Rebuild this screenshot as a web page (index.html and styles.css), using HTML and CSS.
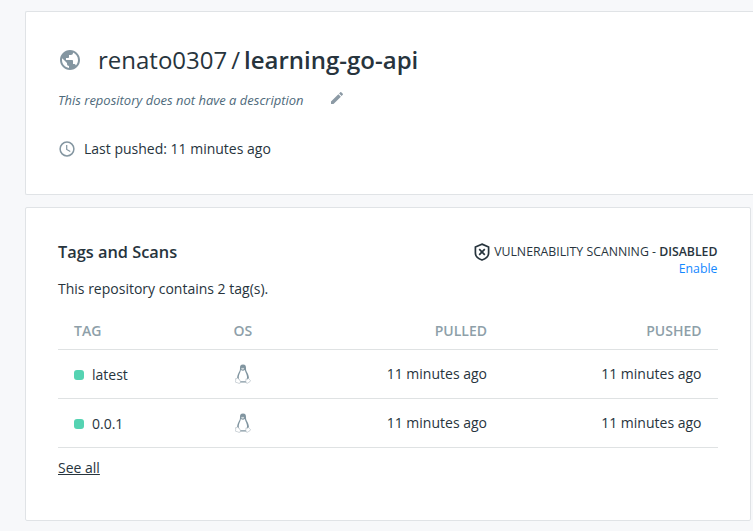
FILE: index.html
```html
<!DOCTYPE html>
<html lang="en">
<head>
<meta charset="utf-8">
<title>renato0307/learning-go-api</title>
<link rel="stylesheet" href="styles.css">
</head>
<body>
<svg width="0" height="0" class="defs" aria-hidden="true">
  <symbol id="tux" viewBox="0 0 16 20">
    <path d="M8 .5C5.500 .5 4.900 2.200 5 4.200C5.100 6.300 4.500 7.100 3.500 8.900C2.500 11 2 12.500 2 15L4 18.400H12L14 15C14 12.500 13.500 11 12.500 8.900C11.500 7.100 10.900 6.300 11 4.200C11.100 2.200 10.500 .5 8 .5Z" fill="#8195a0"/>
    <path d="M5.900 6.100C5.700 7.600 4.800 9 4.200 10.800C3.500 13 3.600 15 5 17.300H11C12.400 15.400 12.300 12.500 11.400 10.300C10.800 8.700 10 7.600 9.900 6.100Q8 7.200 5.900 6.100Z" fill="#fff"/>
    <path d="M6.200 4.300Q6.900 3.500 7.500 4.100Q8.300 3.500 9.200 4.300L8.900 5.300Q7.700 6 6.400 5.300Z" fill="#d2dadd"/>
    <path d="M2.500 13.800L4.800 16.200Q6.300 18.200 5.100 19.200Q3.700 19.600 2.400 18.700L.5 18.200Q.2 17.200 .7 16.300L.5 14.700L2 14.600Z" fill="#fff" stroke="#a9b6be" stroke-width=".6"/>
    <path d="M11 14.800Q12 16 13.500 14.300L14.700 15.800L15.700 16.800Q15.200 17.700 13.800 18.400Q12.500 19.700 11.200 19Q10.500 17.400 11 14.800Z" fill="#fff" stroke="#a9b6be" stroke-width=".6"/>
  </symbol>
</svg>
<section class="card summary">
  <h1 class="title">
    <svg class="globe" viewBox="2 2 20 20"><path fill="#8496a1" d="M12 2C6.480 2 2 6.480 2 12s4.480 10 10 10 10-4.480 10-10S17.520 2 12 2zm-1 17.930c-3.950-.49-7-3.850-7-7.930 0-.62.080-1.210.21-1.790L9 15v1c0 1.100.9 2 2 2v1.930zm6.900-2.540c-.26-.81-1-1.390-1.900-1.390h-1v-3c0-.55-.45-1-1-1H8v-2h2c.55 0 1-.45 1-1V7h2c1.100 0 2-.9 2-2v-.41c2.930 1.190 5 4.060 5 7.410 0 2.080-.8 3.970-2.100 5.390z"/></svg>
    <span class="owner">renato0307</span><span class="slash">/</span><span class="repo">learning-go-api</span>
  </h1>
  <div class="description">
    <em>This repository does not have a description</em>
    <svg class="pencil" viewBox="3 3 18 18"><path fill="#8c9aa5" d="M3 17.250V21h3.750L17.810 9.940l-3.750-3.750L3 17.250zM20.710 7.040c.39-.39.39-1.020 0-1.410l-2.340-2.340c-.39-.39-1.020-.39-1.410 0l-1.830 1.830 3.750 3.750 1.830-1.830z"/></svg>
  </div>
  <div class="pushed">
    <svg class="clock" viewBox="0 0 16 16" fill="none" stroke="#8496a1"><circle cx="8" cy="8" r="6.900" stroke-width="1.500"/><path d="M7.700 4V8.400L11.300 10.500" stroke-width="1.200"/></svg>
    <span>Last pushed: 11 minutes ago</span>
  </div>
</section>
<section class="card tags">
  <header class="tags-head">
    <h2>Tags and Scans</h2>
    <div class="scan">
      <div class="scan-status">
        <svg class="shield" viewBox="0 0 16 18" fill="none" stroke="#27343d" stroke-width="1.700"><path d="M8 1.100L14.600 4V10C14.600 13.500 11.500 15.900 8 17C4.500 15.900 1.400 13.500 1.400 10V4Z"/><path d="M5.200 6.200L10.800 11.800M10.800 6.200L5.200 11.800"/></svg>
        <span>VULNERABILITY SCANNING - <b>DISABLED</b></span>
      </div>
      <a class="enable">Enable</a>
    </div>
  </header>
  <p class="count">This repository contains 2 tag(s).</p>
  <table>
    <thead><tr><th class="c-tag">TAG</th><th class="c-os">OS</th><th class="c-pulled">PULLED</th><th class="c-pushed">PUSHED</th></tr></thead>
    <tbody>
      <tr><td><div class="tag"><i class="dot"></i>latest</div></td><td><svg class="tux"><use href="#tux"/></svg></td><td class="num">11 minutes ago</td><td class="num">11 minutes ago</td></tr>
      <tr><td><div class="tag"><i class="dot"></i>0.0.1</div></td><td><svg class="tux"><use href="#tux"/></svg></td><td class="num">11 minutes ago</td><td class="num">11 minutes ago</td></tr>
    </tbody>
  </table>
  <a class="see-all">See all</a>
</section>
</body>
</html>
```
FILE: styles.css
```css
* { box-sizing: border-box; }
body {
  margin: 0;
  padding: 11px 0 0 25px;
  background: #f7f8fa;
  color: #27343d;
  font: 14px/20px "Open Sans", sans-serif;
  overflow: hidden;
}
.defs { position: absolute; }
.card {
  background: #fff;
  border: 1px solid #e0e3e6;
  border-radius: 2px;
  padding: 32px;
}
.summary {
  height: 184px;
  border-right: 0;
  border-radius: 2px 0 0 2px;
  margin-bottom: 12px;
  padding-top: 28px;
}
.title {
  display: flex;
  align-items: center;
  height: 40px;
  margin: 0;
  font-size: 24px;
  font-weight: 400;
}
.globe { width: 20px; height: 20px; margin: 0 18px 0 2px; }
.slash { margin: 0 4px; }
.repo { font-weight: 600; }
.description {
  display: flex;
  align-items: center;
  height: 20px;
  margin-top: 10px;
  font-size: 13px;
  color: #4e6a7b;
}
.pencil { width: 12px; height: 12px; margin: -4px 0 0 27px; }
.pushed { display: flex; align-items: center; gap: 9px; margin-top: 29px; }
.clock { width: 16px; height: 16px; margin-left: 1px; }
.tags { width: 726px; height: 314px; }
.tags-head { display: flex; justify-content: space-between; height: 38px; }
h2 { margin: 2px 0 0; font-size: 16.35px; line-height: 20px; font-weight: 600; }
.scan { font-size: 12.3px; line-height: 17px; text-align: right; padding: 3px .5px 0 0; }
.scan-status { display: flex; align-items: center; height: 17px; gap: 4px; }
.scan-status b { font-weight: 600; }
.shield { width: 16px; height: 18px; }
.enable { color: #1488ff; }
.count { margin: 1px 0 0; }
table {
  width: 660px;
  margin-top: 13px;
  table-layout: fixed;
  border-collapse: separate;
  border-spacing: 0;
}
th, td {
  padding: 0 16px;
  text-align: left;
  border-bottom: 1px solid #dfe2e3;
}
th:last-child, td:last-child { padding-right: 16.5px; }
th { height: 38px; color: #8e9fa9; font-weight: 600; }
td { height: 49px; }
.c-tag { width: 160px; }
.c-os { width: 70px; }
th.c-os { padding-left: 15.5px; }
.c-pulled { width: 215px; }
.c-pulled, .c-pushed, .num { text-align: right; }
.tag { display: flex; align-items: center; gap: 8px; padding-top: 2px; }
.dot { width: 10px; height: 10px; border-radius: 3px; background: #55d3b2; }
.tux { display: block; width: 16px; height: 20px; margin-left: 1px; }
.see-all { display: inline-block; margin-top: 10px; text-decoration: underline; }
```
